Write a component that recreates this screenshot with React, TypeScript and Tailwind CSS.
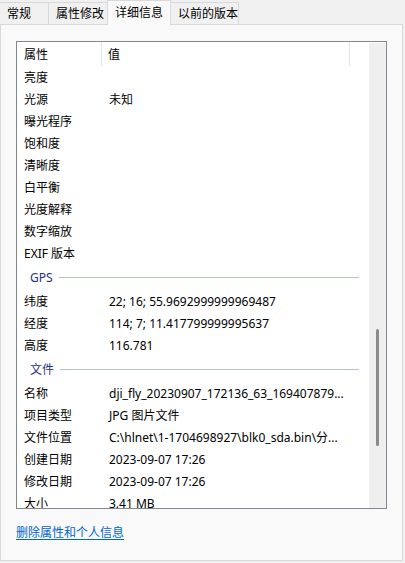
const font = { fontFamily: '"Noto Sans", "Noto Sans CJK SC", sans-serif' };

type Row = { k: string; v?: string } | { group: string };

const rows: Row[] = [
  { k: '亮度' },
  { k: '光源', v: '未知' },
  { k: '曝光程序' },
  { k: '饱和度' },
  { k: '清晰度' },
  { k: '白平衡' },
  { k: '光度解释' },
  { k: '数字缩放' },
  { k: 'EXIF 版本' },
  { group: 'GPS' },
  { k: '纬度', v: '22; 16; 55.9692999999969487' },
  { k: '经度', v: '114; 7; 11.417799999995637' },
  { k: '高度', v: '116.781' },
  { group: '文件' },
  { k: '名称', v: 'dji_fly_20230907_172136_63_169407879...' },
  { k: '项目类型', v: 'JPG 图片文件' },
  { k: '文件位置', v: 'C:\\hlnet\\1-1704698927\\blk0_sda.bin\\分...' },
  { k: '创建日期', v: '2023-09-07 17:26' },
  { k: '修改日期', v: '2023-09-07 17:26' },
  { k: '大小', v: '3.41 MB' },
];

const tabs = [
  { label: '常规', w: 'w-[49px]' },
  { label: '属性修改', w: 'w-[60px]' },
  { label: '详细信息', w: 'w-[64px]' },
  { label: '以前的版本', w: 'w-[69px]' },
];

function Tab({ label, w, active }: { label: string; w: string; active: boolean }) {
  if (active) {
    return (
      <div className={`${w} relative z-10 -mb-px -ml-px h-[25px] pl-[7px] pt-[3px] bg-[#f9f9f9] border border-b-0 border-[#d9d9d9] text-[12px] leading-[18px] whitespace-nowrap`}>
        {label}
      </div>
    );
  }
  return (
    <div className={`${w} h-[22px] pl-[7px] pt-[2px] bg-[#f0f0f0] border border-b-0 border-[#d9d9d9] -ml-px first:ml-0 first:border-l-0 text-[12px] leading-[18px] whitespace-nowrap`}>
      {label}
    </div>
  );
}

export default function App() {
  return (
    <div className="w-[405px] h-[563px] bg-[#f0f0f0] flex flex-col text-black" style={font}>
      <div className="h-[24px] flex items-end shrink-0">
        {tabs.map((t) => (
          <Tab key={t.label} label={t.label} w={t.w} active={t.label === '详细信息'} />
        ))}
      </div>

      <div className="w-[403px] h-[537px] bg-[#f9f9f9] border border-[#d9d9d9] flex flex-col">
        <div className="ml-[15px] mt-[16px] w-[371px] h-[468px] border border-[#838790] bg-white flex">
          <div className="flex-1 overflow-hidden text-[12px]">
            <div className="h-[24px] flex items-center">
              <div className="w-[85px] h-full pl-[7px] pt-[1px] flex items-center border-r border-[#e5e5e5]">属性</div>
              <div className="w-[248px] h-full pl-[6px] pt-[1px] flex items-center border-r border-[#e5e5e5]">值</div>
            </div>
            {rows.map((r, i) =>
              'group' in r ? (
                <div key={i} className="h-[26px] pt-px flex items-center pl-[13px] pr-[10px] gap-[6px]">
                  <span className="text-[#1e3287]">{r.group}</span>
                  <div className="flex-1 h-px bg-[#b7c0d6]" />
                </div>
              ) : (
                <div key={i} className="h-[22px] pt-px flex items-center whitespace-nowrap">
                  <div className="w-[92px] pl-[7px] shrink-0">{r.k}</div>
                  <div>{r.v}</div>
                </div>
              )
            )}
          </div>
          <div className="w-[17px] shrink-0 bg-[#efefef] mt-px flex justify-center">
            <div className="mt-[286px] w-[3px] h-[117px] rounded-full bg-[#8b8b8b]" />
          </div>
        </div>

        <div className="ml-[15px] mt-[15px] text-[12px]">
          <span className="text-[#0066cc] underline underline-offset-2">删除属性和个人信息</span>
        </div>
      </div>
    </div>
  );
}
